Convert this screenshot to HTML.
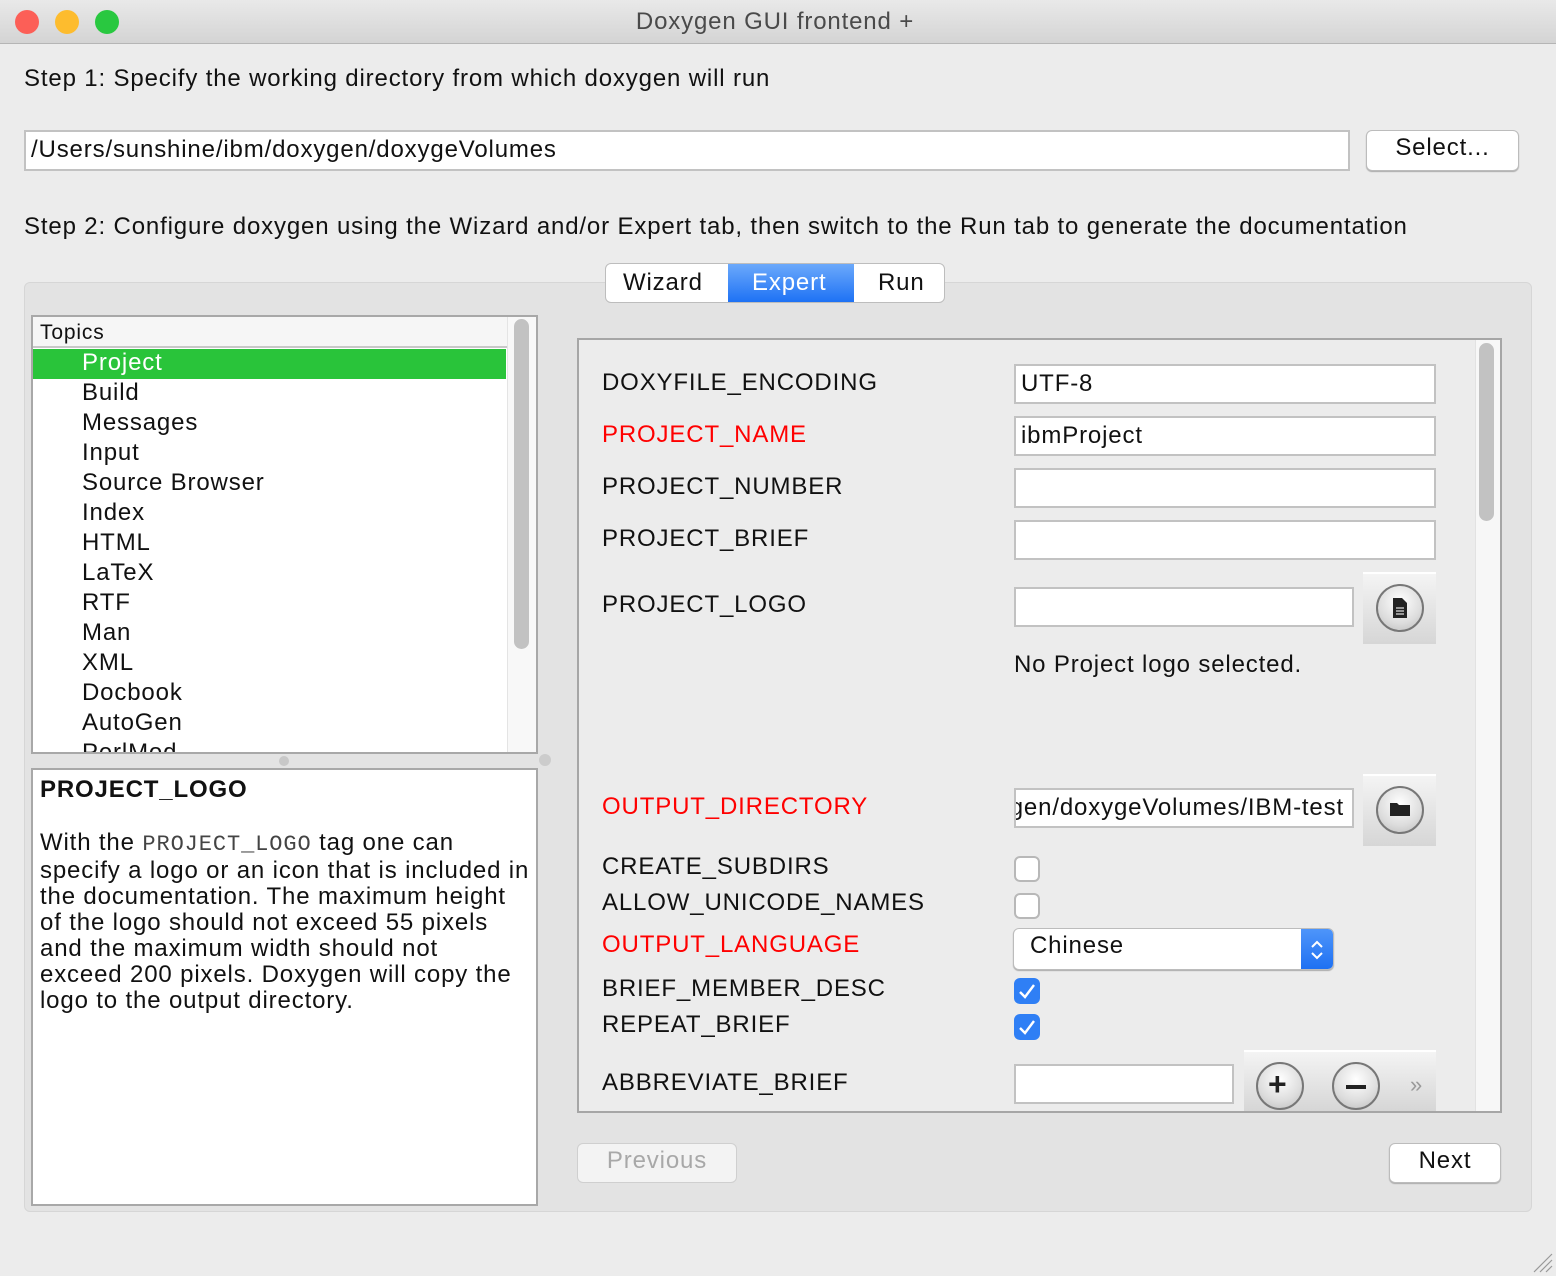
<!DOCTYPE html>
<html><head><meta charset="utf-8"><style>
*{box-sizing:border-box;margin:0;padding:0}
body{width:1556px;height:1276px;background:#ececec;font-family:"Liberation Sans",Arial,sans-serif;color:#111;position:relative;overflow:hidden;letter-spacing:0.85px}
.a{position:absolute}
.t{position:absolute;font-size:24px;white-space:nowrap;line-height:28px}
.red{color:#f00}
.inp{position:absolute;background:#fff;border:2px solid #c2c2c2;height:40px;font-size:24px;line-height:36px;padding-left:5px;white-space:nowrap;overflow:hidden}
.cb{position:absolute;width:26px;height:26px;border:2px solid #b8b8b8;border-radius:6px;background:#fff}
.cbk{position:absolute;width:26px;height:26px;border-radius:6px;background:#2f7ff5}
.rb{position:absolute;width:48px;height:48px;border-radius:50%;border:2px solid #777;background:radial-gradient(circle at 50% 35%,#fff,#ddd 60%,#bbb)}
.btnbox{position:absolute;background:linear-gradient(#f4f4f4,#d6d6d6);border-top:2px solid #fff}
.li{position:absolute;left:82px;font-size:24px;line-height:30px;white-space:nowrap}
</style></head><body>
<div class="a" style="left:0;top:0;width:1556px;height:44px;background:linear-gradient(#e9e9e9,#d4d4d4);border-bottom:1px solid #b5b5b5"></div>
<div class="a" style="left:15px;top:10px;width:24px;height:24px;border-radius:50%;background:#fc5f57"></div>
<div class="a" style="left:55px;top:10px;width:24px;height:24px;border-radius:50%;background:#fdbc2e"></div>
<div class="a" style="left:95px;top:10px;width:24px;height:24px;border-radius:50%;background:#29c840"></div>
<div class="t" style="left:0;width:1550px;text-align:center;top:8px;color:#4a4a4a">Doxygen GUI frontend +</div>

<div class="t" style="left:24px;top:65px">Step 1: Specify the working directory from which doxygen will run</div>
<div class="inp" style="left:24px;top:130px;width:1326px;height:41px">/Users/sunshine/ibm/doxygen/doxygeVolumes</div>
<div class="a" style="left:1366px;top:130px;width:153px;height:41px;background:#fff;border:1px solid #bcbcbc;border-radius:6px;box-shadow:0 1px 1px #aaa;font-size:24px;text-align:center;line-height:34px">Select...</div>
<div class="t" style="left:24px;top:213px">Step 2: Configure doxygen using the Wizard and/or Expert tab, then switch to the Run tab to generate the documentation</div>

<div class="a" style="left:24px;top:282px;width:1508px;height:930px;background:#e3e3e3;border:1px solid #d6d6d6;border-radius:6px"></div>
<div class="a" style="left:605px;top:263px;width:340px;height:40px;background:#fff;border:1px solid #bdbdbd;border-radius:6px;overflow:hidden">
 <div class="a" style="left:122px;top:0;width:126px;height:40px;background:linear-gradient(#6ba9fb,#1a6ff4)"></div>
 <div class="t" style="left:17px;top:5px">Wizard</div>
 <div class="t" style="left:146px;top:5px;color:#fff">Expert</div>
 <div class="t" style="left:272px;top:5px">Run</div>
</div>

<div class="a" style="left:31px;top:315px;width:507px;height:439px;background:#fff;border:2px solid #a8a8a8"></div>
<div class="a" style="left:33px;top:317px;width:474px;height:31px;background:#f6f6f6;border-bottom:2px solid #c8c8c8"></div>
<div class="t" style="left:40px;top:319px;font-size:21px">Topics</div>
<div class="a" style="left:507px;top:317px;width:29px;height:435px;background:#f8f8f8;border-left:1px solid #e4e4e4"></div>
<div class="a" style="left:514px;top:319px;width:15px;height:330px;background:#c2c2c2;border-radius:8px"></div>
<div class="a" style="left:33px;top:349px;width:473px;height:30px;background:#29c43a"></div>
<div class="li" style="top:348px;color:#fff">Project</div>
<div class="li" style="top:378px">Build</div>
<div class="li" style="top:408px">Messages</div>
<div class="li" style="top:438px">Input</div>
<div class="li" style="top:468px">Source Browser</div>
<div class="li" style="top:498px">Index</div>
<div class="li" style="top:528px">HTML</div>
<div class="li" style="top:558px">LaTeX</div>
<div class="li" style="top:588px">RTF</div>
<div class="li" style="top:618px">Man</div>
<div class="li" style="top:648px">XML</div>
<div class="li" style="top:678px">Docbook</div>
<div class="li" style="top:708px">AutoGen</div>
<div class="a" style="left:33px;top:738px;width:473px;height:14px;overflow:hidden"><div class="li" style="left:49px;top:0">PerlMod</div></div>
<div class="a" style="left:279px;top:756px;width:10px;height:10px;border-radius:50%;background:#c8c8c8"></div>
<div class="a" style="left:539px;top:754px;width:12px;height:12px;border-radius:50%;background:#ccc"></div>

<div class="a" style="left:31px;top:768px;width:507px;height:438px;background:#fff;border:2px solid #a8a8a8"></div>
<div class="t" style="left:40px;top:776px;font-weight:bold">PROJECT_LOGO</div>
<div class="a" style="left:40px;top:830px;font-size:24px;line-height:26px;width:500px;white-space:nowrap">With the <span style="font-family:'Liberation Mono',monospace;font-size:22px;color:#444;letter-spacing:0.9px">PROJECT_LOGO</span> tag one can<br>specify a logo or an icon that is included in<br>the documentation. The maximum height<br>of the logo should not exceed 55 pixels<br>and the maximum width should not<br>exceed 200 pixels. Doxygen will copy the<br>logo to the output directory.</div>

<div class="a" style="left:577px;top:338px;width:925px;height:775px;background:#ececec;border:2px solid #a6a6a6"></div>
<div class="a" style="left:1475px;top:340px;width:25px;height:771px;background:#f7f7f7;border-left:1px solid #e2e2e2"></div>
<div class="a" style="left:1479px;top:343px;width:15px;height:178px;background:#c2c2c2;border-radius:8px"></div>

<div class="t" style="left:602px;top:369px">DOXYFILE_ENCODING</div>
<div class="inp" style="left:1014px;top:364px;width:422px">UTF-8</div>
<div class="t red" style="left:602px;top:421px">PROJECT_NAME</div>
<div class="inp" style="left:1014px;top:416px;width:422px">ibmProject</div>
<div class="t" style="left:602px;top:473px">PROJECT_NUMBER</div>
<div class="inp" style="left:1014px;top:468px;width:422px"></div>
<div class="t" style="left:602px;top:525px">PROJECT_BRIEF</div>
<div class="inp" style="left:1014px;top:520px;width:422px"></div>
<div class="t" style="left:602px;top:591px">PROJECT_LOGO</div>
<div class="inp" style="left:1014px;top:587px;width:340px"></div>
<div class="btnbox" style="left:1363px;top:572px;width:73px;height:72px"></div>
<div class="rb" style="left:1376px;top:584px"></div>
<svg class="a" style="left:1390px;top:596px" width="20" height="24" viewBox="0 0 20 24"><path d="M3 2h9l5 5v15H3z" fill="#222"/><path d="M6 12h8M6 15h8M6 18h8" stroke="#ddd" stroke-width="1.3"/></svg>
<div class="t" style="left:1014px;top:651px">No Project logo selected.</div>
<div class="t red" style="left:602px;top:793px">OUTPUT_DIRECTORY</div>
<div class="inp" style="left:1014px;top:788px;width:340px;padding-left:0"><span class="a" style="right:8px;top:0">gen/doxygeVolumes/IBM-test</span></div>
<div class="btnbox" style="left:1363px;top:774px;width:73px;height:72px"></div>
<div class="rb" style="left:1376px;top:786px"></div>
<svg class="a" style="left:1388px;top:800px" width="24" height="18" viewBox="0 0 24 18"><path d="M2 3h7l2 2h11v11H2z" fill="#222"/></svg>
<div class="t" style="left:602px;top:853px">CREATE_SUBDIRS</div>
<div class="cb" style="left:1014px;top:856px"></div>
<div class="t" style="left:602px;top:889px">ALLOW_UNICODE_NAMES</div>
<div class="cb" style="left:1014px;top:893px"></div>
<div class="t red" style="left:602px;top:931px">OUTPUT_LANGUAGE</div>
<div class="a" style="left:1013px;top:928px;width:321px;height:42px;background:#fff;border:1px solid #bcbcbc;border-radius:6px;box-shadow:0 1px 1px #aaa;overflow:hidden">
 <div class="t" style="left:16px;top:3px">Chinese</div>
 <div class="a" style="right:0;top:0;width:32px;height:42px;background:linear-gradient(#4e95fa,#1c6ff2)"></div>
 <svg class="a" style="right:8px;top:10px" width="16" height="22" viewBox="0 0 16 22"><path d="M3 8l5-5 5 5M3 14l5 5 5-5" stroke="#fff" stroke-width="2" fill="none"/></svg>
</div>
<div class="t" style="left:602px;top:975px">BRIEF_MEMBER_DESC</div>
<div class="cbk" style="left:1014px;top:978px"></div>
<svg class="a" style="left:1017px;top:982px" width="20" height="18"><path d="M3 10l5 5 9-12" stroke="#fff" stroke-width="2.4" fill="none"/></svg>
<div class="t" style="left:602px;top:1011px">REPEAT_BRIEF</div>
<div class="cbk" style="left:1014px;top:1014px"></div>
<svg class="a" style="left:1017px;top:1018px" width="20" height="18"><path d="M3 10l5 5 9-12" stroke="#fff" stroke-width="2.4" fill="none"/></svg>
<div class="t" style="left:602px;top:1069px">ABBREVIATE_BRIEF</div>
<div class="inp" style="left:1014px;top:1064px;width:220px"></div>
<div class="btnbox" style="left:1244px;top:1050px;width:192px;height:61px"></div>
<div class="rb" style="left:1256px;top:1062px"></div>
<div class="t" style="left:1268px;top:1070px;font-size:32px;font-weight:bold;color:#222">+</div>
<div class="rb" style="left:1332px;top:1062px"></div>
<div class="a" style="left:1346px;top:1085px;width:20px;height:4px;background:#222"></div>
<div class="t" style="left:1410px;top:1071px;color:#999;font-size:22px">»</div>

<div class="a" style="left:577px;top:1143px;width:160px;height:40px;background:#f3f3f3;border:1px solid #cfcfcf;border-radius:6px;color:#a8a8a8;font-size:24px;text-align:center;line-height:34px">Previous</div>
<div class="a" style="left:1389px;top:1143px;width:112px;height:40px;background:#fff;border:1px solid #bcbcbc;border-radius:6px;box-shadow:0 1px 1px #aaa;font-size:24px;text-align:center;line-height:34px">Next</div>
<svg class="a" style="left:1532px;top:1252px" width="22" height="22"><path d="M2 20L20 2M8 20L20 8M14 20L20 14" stroke="#999" stroke-width="1.2"/></svg>
</body></html>
